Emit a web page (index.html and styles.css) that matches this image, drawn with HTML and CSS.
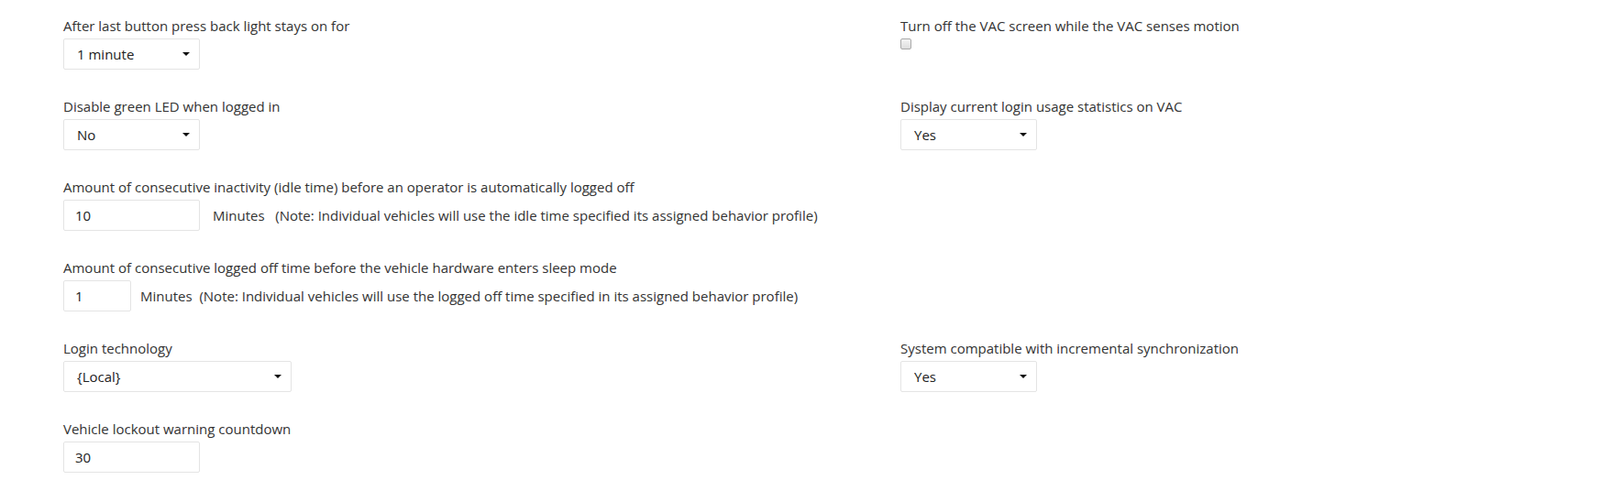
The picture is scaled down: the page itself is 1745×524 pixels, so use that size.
FILE: index.html
```html
<!DOCTYPE html>
<html>
<head>
    <meta charset="utf-8">
    <title>VAC settings</title>
    <link rel="stylesheet" href="styles.css">
</head>
<body>
<form class="settings">
    <div class="row">
        <div class="field">
            <label>After last button press back light stays on for</label>
            <span class="select w150"><select><option>1 minute</option></select></span>
        </div>
        <div class="field">
            <label>Turn off the VAC screen while the VAC senses motion</label>
            <input type="checkbox" class="check">
        </div>
    </div>

    <div class="row">
        <div class="field">
            <label>Disable green LED when logged in</label>
            <span class="select w150"><select><option>No</option></select></span>
        </div>
        <div class="field">
            <label>Display current login usage statistics on VAC</label>
            <span class="select w150"><select><option>Yes</option></select></span>
        </div>
    </div>

    <div class="row">
        <div class="field">
            <label>Amount of consecutive inactivity (idle time) before an operator is automatically logged off</label>
            <div class="inline">
                <input type="text" class="text w150" value="10">
                <span class="note gap14">Minutes &nbsp;&nbsp;(Note: Individual vehicles will use the idle time specified its assigned behavior profile)</span>
            </div>
        </div>
    </div>

    <div class="row">
        <div class="field">
            <label>Amount of consecutive logged off time before the vehicle hardware enters sleep mode</label>
            <div class="inline">
                <input type="text" class="text w75" value="1">
                <span class="note gap10">Minutes &nbsp;(Note: Individual vehicles will use the logged off time specified in its assigned behavior profile)</span>
            </div>
        </div>
    </div>

    <div class="row">
        <div class="field">
            <label>Login technology</label>
            <span class="select w250"><select><option>{Local}</option></select></span>
        </div>
        <div class="field">
            <label>System compatible with incremental synchronization</label>
            <span class="select w150"><select><option>Yes</option></select></span>
        </div>
    </div>

    <div class="row">
        <div class="field">
            <label>Vehicle lockout warning countdown</label>
            <input type="text" class="text w150" value="30">
        </div>
    </div>
</form>
</body>
</html>
```

FILE: styles.css
```css
html, body { margin: 0; padding: 0; background: #fff; }
body {
    font-family: "Open Sans", "Liberation Sans", sans-serif;
    font-size: 15px;
    color: #333;
}
*{ box-sizing: border-box; }

/* each row: fixed left column, rest for the right one */
.settings{ padding: 18px 0 0 69px; }
.row{
    display: grid;
    grid-template-columns: 913px 1fr;
    margin-bottom: 30px;
}
.field label{
    display: block;
    line-height: 20px;
    margin-bottom: 4px;
    white-space: nowrap;
}

/* selects with a small caret */
.select{
    display: block;
    position: relative;
    height: 34px;
}
.select select{
    -webkit-appearance: none;
    appearance: none;
    width: 100%; height: 100%;
    border: 1px solid #e4e4e4;
    border-radius: 2px;
    background: #fff;
    padding: 0 28px 0 14px;
    font: inherit;
    color: #222;
    outline: 0;
}
.select:after{
    content: "";
    position: absolute;
    right: 11px; top: 15px;
    border-left: 4px solid transparent;
    border-right: 4px solid transparent;
    border-top: 4px solid #111;
    pointer-events: none;
}
.w150{ width: 149px; }
.w250{ width: 249px; }
.w75{ width: 74px; }

.text{
    display: block;
    height: 34px;
    border: 1px solid #e4e4e4;
    border-radius: 2px;
    padding: 0 12px;
    font: inherit;
    color: #222;
    outline: 0;
}
.inline{ display: flex; align-items: center; }
.note{ white-space: nowrap; }
.gap14{ margin-left: 14px; }
.gap10{ margin-left: 10px; }

.check{
    -webkit-appearance: none;
    appearance: none;
    display: block;
    width: 12px; height: 12px;
    margin: 3px 0 0 0;
    border: 1px solid #a9a9a9;
    border-radius: 2px;
    background: linear-gradient(#f4f4f4, #dedede);
}
```
